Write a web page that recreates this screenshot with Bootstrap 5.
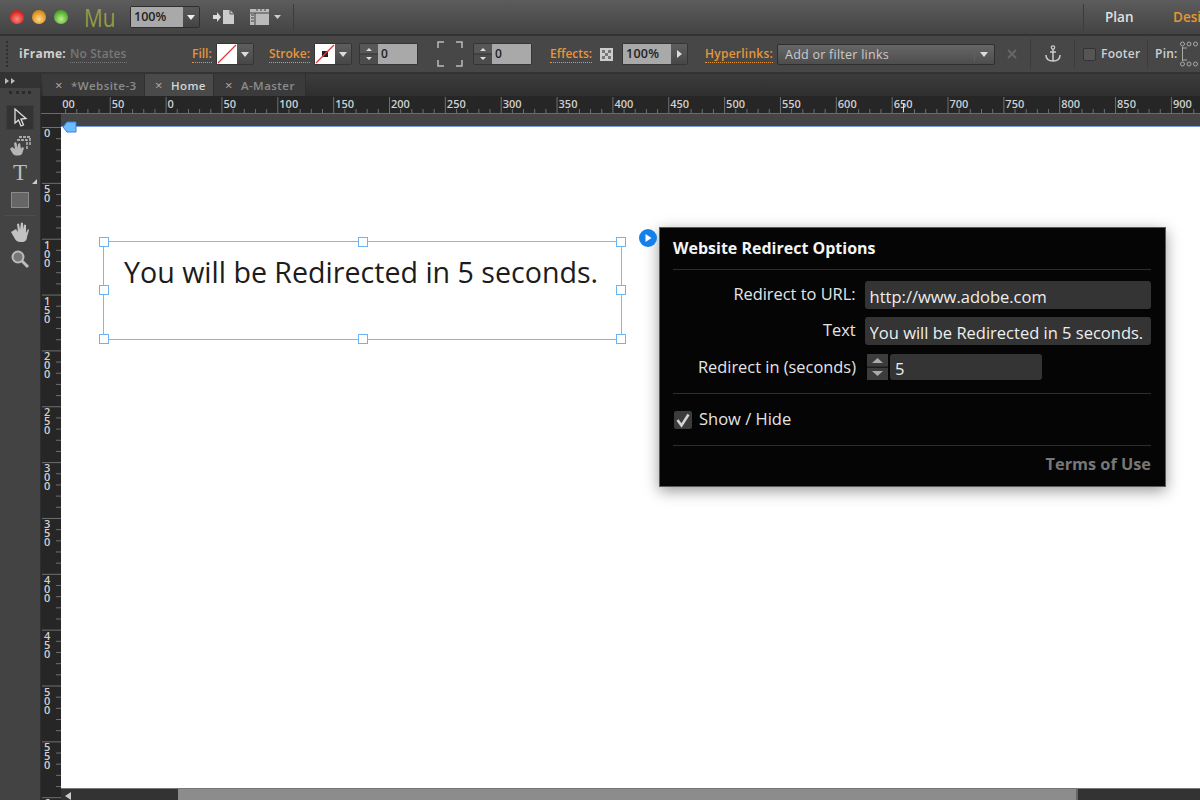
<!DOCTYPE html>
<html lang="en">
<head>
<meta charset="UTF-8">
<title>Website Redirect Options</title>
<link href="https://cdn.jsdelivr.net/npm/bootstrap@5.3.0/dist/css/bootstrap.min.css" rel="stylesheet">
<style>
    html, body { width: 1200px; height: 800px; overflow: hidden; }
    body { font-family: "Open Sans", "Liberation Sans", sans-serif; background: #454545; color: #ccc; }
    .mu-top { height: 36px; background: linear-gradient(#5c5c5c, #434343); border-bottom: 2px solid #333; }
    .mu-opts { height: 38px; background: #474747; border-bottom: 2px solid #333; font-size: 12px; font-weight: 600; letter-spacing: .25px; }
    .mu-opts > *, .mu-top > * { flex: none; }
    .light { border-radius: 50%; width: 14px; height: 14px; margin-right: 8px; }
    .light-r { background: radial-gradient(circle at 50% 65%, #ff8a80, #d0201c 70%); margin-left: 10px; }
    .light-y { background: radial-gradient(circle at 50% 65%, #ffd98a, #d98a16 70%); }
    .light-g { background: radial-gradient(circle at 50% 65%, #bdf08a, #4ba52a 70%); }
    .mu-logo { font-size: 26px; line-height: 1; color: #969c45; margin-left: 8px; width: 32px; transform: scaleX(.8); transform-origin: left center; }
    .zoom-box { margin-left: 14px; width: 70px; height: 22px; border: 1px solid #2e2e2e; border-radius: 2px; }
    .val-field { background: #a9a9a9; color: #222; font-size: 12.5px; font-weight: 600; line-height: 20px; padding-left: 3px; }
    .drop-btn { background: linear-gradient(#5a5a5a, #444); }
    .vsep { width: 1px; background: #3c3c3c; align-self: stretch; }
    #topSep1 { margin: 4px 0 4px 12px; }
    #topSep2 { margin: 4px 0 4px 789px; }
    #iconPage { margin-left: 13px; }
    #iconFilm { margin-left: 14px; }
    .mode-plan { margin-left: 21px; width: 28px; font-size: 13.5px; font-weight: 600; color: #e0e0e0; }
    .mode-des { margin-left: 40px; font-size: 13.5px; font-weight: 600; color: #ea952f; }

    .grip { margin-left: 6px; width: 3px; height: 26px; border-left: 2px dotted #2f2f2f; }
    #lblFrame { margin-left: 10px; width: 46px; color: #d0d0d0; font-weight: 700; }
    #lblStates { margin-left: 5px; width: 56px; color: #777; font-weight: 600; letter-spacing: .1px; }
    .dotted { border-bottom: 1px dotted currentColor; line-height: 14px; }
    .orange { color: #e6953a; }
    #lblFill { margin-left: 66px; width: 21px; letter-spacing: 0; }
    .swatch { width: 20px; height: 20px; background: #fff; }
    .btn-tiny { width: 16px; height: 20px; background: linear-gradient(#5e5e5e, #474747); }
    .ctl-group { border: 1px solid #353535; border-radius: 2px; }
    #grpFill { margin-left: 3px; }
    #lblStroke { margin-left: 15px; width: 41px; letter-spacing: 0; }
    #grpStroke { margin-left: 4px; }
    #grpStep1 { margin-left: 7px; }
    #iconCorners { margin-left: 19px; }
    #grpStep2 { margin-left: 10px; }
    .step-btns { width: 18px; height: 20px; background: #333; }
    .step-val { width: 39px; height: 20px; line-height: 20px; padding-left: 3px; background: #a9a9a9; color: #222; font-size: 12px; }
    #lblEffects { margin-left: 18px; width: 43px; letter-spacing: 0; }
    #iconChecker { margin-left: 7px; }
    #grpOpacity { margin-left: 9px; }
    #grpOpacity .val-field { width: 48px; height: 20px; }
    #lblLinks { margin-left: 17px; width: 68px; }
    .link-select { margin-left: 4px; width: 218px; height: 21px; border: 1px solid #2e2e2e; border-radius: 2px; background: linear-gradient(#666, #4d4d4d); padding-left: 7px; line-height: 19px; color: #ccc; font-weight: 400; font-size: 12.5px; }
    .select-end { width: 20px; height: 13px; border-left: 1px solid #5f5f5f; }
    #iconX { margin-left: 12px; }
    #sepA { margin: 3px 0 3px 13px; }
    #iconAnchor { margin-left: 14px; }
    #sepB { margin: 3px 0 3px 13px; }
    .foot-box { margin-left: 8px; width: 13px; height: 13px; background: #555; border: 1px solid #333; border-radius: 2px; }
    #lblFooter { margin-left: 5px; width: 39px; color: #d0d0d0; }
    #sepC { margin: 3px 0 3px 7px; }
    #lblPin { margin-left: 7px; width: 24px; color: #d0d0d0; }
    #iconPin { margin-left: 1px; }

    .work { height: 726px; }
    .side-col { width: 41px; background: #434343; border-right: 1px solid #2e2e2e; }
    .side-top { height: 14px; background: #333; padding: 4px 0 0 5px; line-height: 0; }
    .side-grip { height: 14px; margin: 3px 9px 0; border-top: 3px dotted #2a2a2a; }
    .tool { height: 27px; }
    .tool-on { margin: 0 6px 2px; height: 25px; background: #333; border: 1px solid #3c3c3c; }
    .tool-line { height: 1px; background: #4d4d4d; margin: 2px 4px; }
    .tool-text { font-family: "Liberation Serif", serif; font-size: 23px; line-height: 1; color: #bdbdbd; }
    .tool-corner { position: absolute; right: 3px; bottom: 2px; line-height: 0; }
    .tabs-row { height: 22px; background: linear-gradient(#3c3c3c, #2f2f2f); font-size: 11.5px; font-weight: 600; letter-spacing: .45px; color: #8c8c8c; }
    .doc-tab { height: 22px; line-height: 22px; background: #3b3b3b; border-right: 1px solid #303030; }
    .doc-tab span { margin-right: 8px; font-weight: 400; font-size: 13px; color: #aaa; }
    #tabSite { width: 102px; padding-left: 12px; margin-left: 2px; }
    #tabHome { width: 69px; padding-left: 10px; background: #4a4a4a; color: #d4d4d4; }
    #tabMaster { width: 92px; padding-left: 11px; }
    .rule-v { width: 20px; height: 704px; background: #262626; flex: none; }
    .rule-h { height: 30px; display: block; background: #262626; }
    .guide-line { height: 1px; background: #7d9be0; }
    .page-area { height: 661px; background: #fff; padding: 100px 0 0 42px; }
    .guide-tag { position: absolute; left: 1px; top: -6px; }
    .sel-frame { width: 519px; height: 99px; margin-top: 14px; border: 1px solid #78baf8; padding: 12px 0 0 20px; color: #1c1c1c; font-size: 28.6px; line-height: 36px; white-space: nowrap; }
    .hnd { position: absolute; width: 10px; height: 10px; background: #fff; border: 1px solid #6db3f2; }
    .hnd-tl { left: -5px; top: -5px; } .hnd-tm { left: 254px; top: -5px; } .hnd-tr { right: -5px; top: -5px; }
    .hnd-ml { left: -5px; top: 43px; } .hnd-mr { right: -5px; top: 43px; }
    .hnd-bl { left: -5px; bottom: -5px; } .hnd-bm { left: 254px; bottom: -5px; } .hnd-br { right: -5px; bottom: -5px; }
    .opt-panel { width: 507px; height: 260px; margin-left: 37px; padding: 0 14px 0 13px; background: #050505; border: 1px solid #5a5a5a; box-shadow: 0 4px 14px rgba(0,0,0,.4); color: #e4e4e4; font-size: 16.4px; }
    .opt-play { position: absolute; left: -21px; top: 1px; line-height: 0; }
    .opt-title { height: 42px; padding-top: 8px; font-size: 16px; line-height: 24px; font-weight: 700; color: #f4f4f4; border-bottom: 1px solid #2e2e2e; margin-bottom: 11px; }
    .opt-row { margin-bottom: 8px; }
    .opt-row + .opt-row { margin-bottom: 9px; }
    .opt-label { width: 183px; text-align: right; margin-right: 9px; line-height: 26px; white-space: nowrap; }
    .opt-input.form-control { width: 287px; height: 28px; padding: 2px 5px 0; background: #343434; border: 0; border-radius: 3px; color: #eee; font-size: 16.5px; box-shadow: none; }
    .opt-num.form-control { width: 152px; height: 26px; padding: 2px 5px 0; background: #343434; border: 0; border-radius: 3px; color: #eee; font-size: 16.5px; box-shadow: none; }
    .opt-step { width: 21px; height: 26px; margin: 0 2px; background: #1c1c1c; }
    .opt-check { height: 53px; margin-top: 13px; border-top: 1px solid #2e2e2e; border-bottom: 1px solid #2e2e2e; padding-left: 1px; font-size: 16.5px; }
    .opt-checkbox { width: 18px; height: 18px; margin-right: 7px; background: #3c3c3c; border-radius: 2px; line-height: 0; }
    .opt-terms { margin-top: 6px; text-align: right; color: #777; font-weight: 700; font-size: 16.3px; }
    .scroll-row { height: 12px; background: #333; border-top: 1px solid #777; }
    .scroll-thumb { width: 900px; margin-left: 117px; background: #8c8c8c; border-right: 2px solid #666; }
    .scroll-arrow { left: 4px; top: 3px; }
</style>
</head>
<body>

<!-- application bar -->
<div class="mu-top d-flex align-items-center">
    <div class="light light-r"></div>
    <div class="light light-y"></div>
    <div class="light light-g"></div>
    <div class="mu-logo">Mu</div>
    <div class="zoom-box d-flex">
        <div class="val-field flex-grow-1">100%</div>
        <div class="drop-btn d-flex align-items-center justify-content-center"><svg width="16" height="20" viewBox="0 0 16 20"><path d="M4 8h8l-4 5z" fill="#eee"/></svg></div>
    </div>
    <svg id="iconPage" width="22" height="18" viewBox="0 0 22 18"><path d="M0 7h4V4l4 5-4 5v-3H0z" fill="#ddd"/><path d="M10 2h7l4 4v10H10z" fill="#ccc"/><path d="M17 2v4h4" fill="none" stroke="#555"/></svg>
    <svg id="iconFilm" width="32" height="20" viewBox="0 0 32 20"><rect x="1" y="2" width="19" height="16" fill="#bbb"/><path d="M1 6h19M6 6v12" stroke="#444"/><path d="M2 8h3M2 11h3M2 14h3M7 3h2M11 3h2M15 3h2" stroke="#444"/><path d="M25 8h7l-3.500 4z" fill="#ccc"/></svg>
    <div class="vsep" id="topSep1"></div>
    <div class="vsep" id="topSep2"></div>
    <div class="mode-plan">Plan</div>
    <div class="mode-des">Design</div>
</div>

<!-- options bar -->
<div class="mu-opts d-flex align-items-center text-nowrap">
    <div class="grip"></div>
    <div id="lblFrame">iFrame:</div>
    <div id="lblStates"><span class="dotted">No States</span></div>
    <div id="lblFill" class="orange"><span class="dotted">Fill:</span></div>
    <div id="grpFill" class="ctl-group d-flex">
        <div class="swatch"><svg width="20" height="20" viewBox="0 0 20 20"><path d="M1 19L19 1" stroke="#e03a3a" stroke-width="1.200"/></svg></div>
        <div class="btn-tiny"><svg width="16" height="20" viewBox="0 0 16 20"><path d="M4 8h8l-4 5z" fill="#ddd"/></svg></div>
    </div>
    <div id="lblStroke" class="orange"><span class="dotted">Stroke:</span></div>
    <div id="grpStroke" class="ctl-group d-flex">
        <div class="swatch"><svg width="20" height="20" viewBox="0 0 20 20"><rect x="7" y="7" width="6" height="6" fill="#222"/><path d="M1 19L19 1" stroke="#e03a3a" stroke-width="1.200"/></svg></div>
        <div class="btn-tiny"><svg width="16" height="20" viewBox="0 0 16 20"><path d="M4 8h8l-4 5z" fill="#ddd"/></svg></div>
    </div>
    <div id="grpStep1" class="ctl-group d-flex">
        <div class="step-btns"><svg width="18" height="20" viewBox="0 0 18 20"><rect width="18" height="9.500" fill="#575757"/><rect y="10.500" width="18" height="9.500" fill="#4c4c4c"/><path d="M6 7l3-3 3 3zM6 13l3 3 3-3z" fill="#ddd"/></svg></div>
        <div class="step-val">0</div>
    </div>
    <svg id="iconCorners" width="26" height="26" viewBox="0 0 26 26"><path d="M1 7V1h6M19 1h6v6M25 19v6h-6M7 25H1v-6" fill="none" stroke="#bbb" stroke-width="1.500"/></svg>
    <div id="grpStep2" class="ctl-group d-flex">
        <div class="step-btns"><svg width="18" height="20" viewBox="0 0 18 20"><rect width="18" height="9.500" fill="#575757"/><rect y="10.500" width="18" height="9.500" fill="#4c4c4c"/><path d="M6 7l3-3 3 3zM6 13l3 3 3-3z" fill="#ddd"/></svg></div>
        <div class="step-val">0</div>
    </div>
    <div id="lblEffects" class="orange"><span class="dotted">Effects:</span></div>
    <svg id="iconChecker" width="13" height="13" viewBox="0 0 13 13"><rect width="13" height="13" fill="#ccc"/><path d="M2 2h3v3H2zM8 2h3v3H8zM5 5h3v3H5zM2 8h3v3H2zM8 8h3v3H8z" fill="#777"/></svg>
    <div id="grpOpacity" class="ctl-group d-flex">
        <div class="val-field">100%</div>
        <div class="btn-tiny"><svg width="16" height="20" viewBox="0 0 16 20"><path d="M6 6l5 4-5 4z" fill="#ddd"/></svg></div>
    </div>
    <div id="lblLinks" class="orange"><span class="dotted">Hyperlinks:</span></div>
    <div class="link-select d-flex justify-content-between align-items-center">
        <span>Add or filter links</span>
        <div class="select-end"><svg class="d-block" width="19" height="13" viewBox="0 0 19 13"><path d="M5 4h8l-4 5z" fill="#ddd"/></svg></div>
    </div>
    <svg id="iconX" width="10" height="10" viewBox="0 0 10 10"><path d="M1 1l8 8M9 1l-8 8" stroke="#666" stroke-width="2"/></svg>
    <div class="vsep" id="sepA"></div>
    <svg id="iconAnchor" width="16" height="18" viewBox="0 0 16 18"><circle cx="8" cy="2.500" r="1.700" fill="none" stroke="#ccc" stroke-width="1.200"/><path d="M8 4v12M5 7h6M1 10c0 4 3 6 7 6s7-2 7-6" fill="none" stroke="#ccc" stroke-width="1.500"/></svg>
    <div class="vsep" id="sepB"></div>
    <div class="foot-box"></div>
    <div id="lblFooter">Footer</div>
    <div class="vsep" id="sepC"></div>
    <div id="lblPin">Pin:</div>
    <svg id="iconPin" width="24" height="26" viewBox="0 0 24 26"><g fill="none" stroke="#aaa"><circle cx="2.500" cy="3" r="2"/><circle cx="9" cy="3" r="2"/><circle cx="15.500" cy="3" r="2"/><circle cx="2.500" cy="23" r="2"/><circle cx="9" cy="23" r="2"/><circle cx="15.500" cy="23" r="2"/><path d="M2.500 6v14M3 7h4M3 19h4"/></g></svg>
</div>

<div class="work d-flex">
    <!-- tools -->
    <div class="side-col">
        <div class="side-top"><svg width="10" height="6" viewBox="0 0 10 6"><path d="M0 0l4 3-4 3zM6 0l4 3-4 3z" fill="#bbb"/></svg></div>
        <div class="side-grip"></div>
        <div class="tool-on d-flex align-items-center justify-content-center">
            <svg width="16" height="20" viewBox="0 0 16 20"><path d="M3 1v14l3.500-3 2.500 6 2.500-1-2.500-6 5-.5z" fill="#333" stroke="#ddd" stroke-width="1.300"/></svg>
        </div>
        <div class="tool d-flex align-items-center justify-content-center">
            <svg width="24" height="22" viewBox="0 0 24 22"><path d="M2 14l3 5c2 2 7 2 9 0l2-6-2-1-1 2-1-6-2 1v4L8 7 6 8l1 6-3-2z" fill="#b5b5b5"/><path d="M11 2h11v9M9 5h10v10" fill="none" stroke="#c8c8c8" stroke-width="1.300" stroke-dasharray="3 1"/></svg>
        </div>
        <div class="tool d-flex align-items-center justify-content-center position-relative">
            <span class="tool-text">T</span>
            <span class="tool-corner"><svg width="5" height="5" viewBox="0 0 5 5"><path d="M5 0v5H0z" fill="#ccc"/></svg></span>
        </div>
        <div class="tool d-flex align-items-center justify-content-center">
            <svg width="18" height="16" viewBox="0 0 18 16"><rect x=".5" y=".5" width="17" height="15" fill="#666" stroke="#8a8a8a"/></svg>
        </div>
        <div class="tool-line"></div>
        <div class="tool d-flex align-items-center justify-content-center">
            <svg width="20" height="20" viewBox="0 0 20 20"><path d="M1 10l4 7c1 2 3 3 5 3h2c3 0 5-2 5-5l2-7-1-1-2 4V3l-2-.5-1 5V1l-2-.5-1 7-1-6-2 .5 1 8-2-3z" fill="#c2c2c2"/></svg>
        </div>
        <div class="tool d-flex align-items-center justify-content-center">
            <svg width="20" height="20" viewBox="0 0 20 20"><circle cx="8" cy="8" r="5.500" fill="#777" stroke="#bbb" stroke-width="2"/><path d="M12 12l6 6" stroke="#bbb" stroke-width="3"/></svg>
        </div>
    </div>

    <div class="flex-grow-1 d-flex flex-column min-w-0">
        <!-- document tabs -->
        <div class="tabs-row d-flex">
            <div class="doc-tab" id="tabSite"><span>&#215;</span>*Website-3</div>
            <div class="doc-tab" id="tabHome"><span>&#215;</span>Home</div>
            <div class="doc-tab" id="tabMaster"><span>&#215;</span>A-Master</div>
        </div>

        <div class="d-flex flex-grow-1">
            <svg class="rule-v" id="ruleV" viewBox="0 0 20 704"></svg>
            <div class="flex-grow-1 d-flex flex-column">
                <svg class="rule-h" id="ruleH" width="1139" height="30" viewBox="0 0 1139 30"></svg>
                <div class="guide-line"></div>

                <!-- page -->
                <div class="page-area d-flex align-items-start position-relative">
                    <svg class="guide-tag" width="15" height="12" viewBox="0 0 15 12"><path d="M1 6l4-5h9v10H5z" fill="#6cbcff" stroke="#3f7fe0"/></svg>

                    <div class="sel-frame position-relative">
                        You will be Redirected in 5 seconds.
                        <i class="hnd hnd-tl"></i><i class="hnd hnd-tm"></i><i class="hnd hnd-tr"></i>
                        <i class="hnd hnd-ml"></i><i class="hnd hnd-mr"></i>
                        <i class="hnd hnd-bl"></i><i class="hnd hnd-bm"></i><i class="hnd hnd-br"></i>
                    </div>

                    <div class="opt-panel position-relative">
                        <div class="opt-play"><svg width="18" height="18" viewBox="0 0 18 18"><circle cx="9" cy="9" r="9" fill="#1580ea"/><path d="M6.500 5l6 4-6 4z" fill="#fff"/></svg></div>
                        <div class="opt-title">Website Redirect Options</div>
                        <div class="opt-row d-flex">
                            <label class="opt-label">Redirect to URL:</label>
                            <input class="opt-input form-control" type="text" value="http://www.adobe.com" readonly>
                        </div>
                        <div class="opt-row d-flex">
                            <label class="opt-label">Text</label>
                            <input class="opt-input form-control" type="text" value="You will be Redirected in 5 seconds." readonly>
                        </div>
                        <div class="d-flex">
                            <label class="opt-label">Redirect in (seconds)</label>
                            <svg class="opt-step" viewBox="0 0 21 26"><rect width="21" height="12.500" fill="#3c3c3c"/><rect y="14" width="21" height="12" fill="#3c3c3c"/><path d="M5 9l5.500-5 5.500 5zM5 17l5.500 5 5.500-5z" fill="#aaa"/></svg>
                            <input class="opt-num form-control" type="text" value="5" readonly>
                        </div>
                        <div class="opt-check d-flex align-items-center">
                            <span class="opt-checkbox d-inline-block"><svg width="18" height="18" viewBox="0 0 18 18"><path d="M3.500 9l4 5.500 7-11" fill="none" stroke="#d4d4d4" stroke-width="2.500"/></svg></span>
                            <span>Show / Hide</span>
                        </div>
                        <div class="opt-terms">Terms of Use</div>
                    </div>
                </div>

                <!-- scroll bar -->
                <div class="scroll-row d-flex position-relative">
                    <svg class="scroll-arrow position-absolute" width="7" height="8" viewBox="0 0 7 8"><path d="M6 0v8L0 4z" fill="#ccc"/></svg>
                    <div class="scroll-thumb"></div>
                </div>
            </div>
        </div>
    </div>
</div>

<script>
    // rulers: 50 units = 55.85px, 0 of the page sits at x=165.6 / y=127
    const STEP = 55.85;
    const NS = "http://www.w3.org/2000/svg";

    function add(svg, tag, attrs, text) {
        const el = document.createElementNS(NS, tag);
        Object.keys(attrs).forEach(k => el.setAttribute(k, attrs[k]));
        if (text !== undefined) el.textContent = text;
        svg.appendChild(el);
    }

    const ruleH = document.getElementById("ruleH");
    const zeroX = 165.6 - 61;
    add(ruleH, "rect", { x: 0, y: 17, width: 1139, height: 13, fill: "#454545" });
    add(ruleH, "rect", { x: 0, y: 17, width: 1139, height: 1, fill: "#6a6a6a" });
    for (let k = -2; k <= 18; k++) {
        const x = zeroX + k * STEP;
        add(ruleH, "rect", { x: x, y: 1, width: 1, height: 16, fill: "#6f6f6f" });
        add(ruleH, "text", { x: x + 2, y: 12, fill: "#d0d0d0", "font-size": 11, "font-weight": 600, "font-family": "Open Sans, sans-serif" }, String(Math.abs(k) * 50));
        for (let m = 1; m < 5; m++) {
            add(ruleH, "rect", { x: x + m * STEP / 5, y: 13, width: 1, height: 4, fill: "#6f6f6f" });
        }
    }
    add(ruleH, "rect", { x: 842, y: 8, width: 1, height: 8, fill: "#ddd" });

    const ruleV = document.getElementById("ruleV");
    add(ruleV, "rect", { x: 0, y: 17, width: 20, height: 1, fill: "#6a6a6a" });
    for (let k = 0; k <= 12; k++) {
        const y = 31 + k * STEP;
        add(ruleV, "rect", { x: 1, y: y, width: 19, height: 1, fill: "#6f6f6f" });
        String(k * 50).split("").forEach((d, i) => {
            add(ruleV, "text", { x: 3, y: y + 10 + i * 9, fill: "#d0d0d0", "font-size": 11, "font-weight": 600, "font-family": "Open Sans, sans-serif" }, d);
        });
        for (let m = 1; m < 5; m++) {
            add(ruleV, "rect", { x: 15, y: y + m * STEP / 5, width: 5, height: 1, fill: "#6f6f6f" });
        }
    }
</script>
<script src="https://cdn.jsdelivr.net/npm/bootstrap@5.3.0/dist/js/bootstrap.bundle.min.js"></script>
</body>
</html>
